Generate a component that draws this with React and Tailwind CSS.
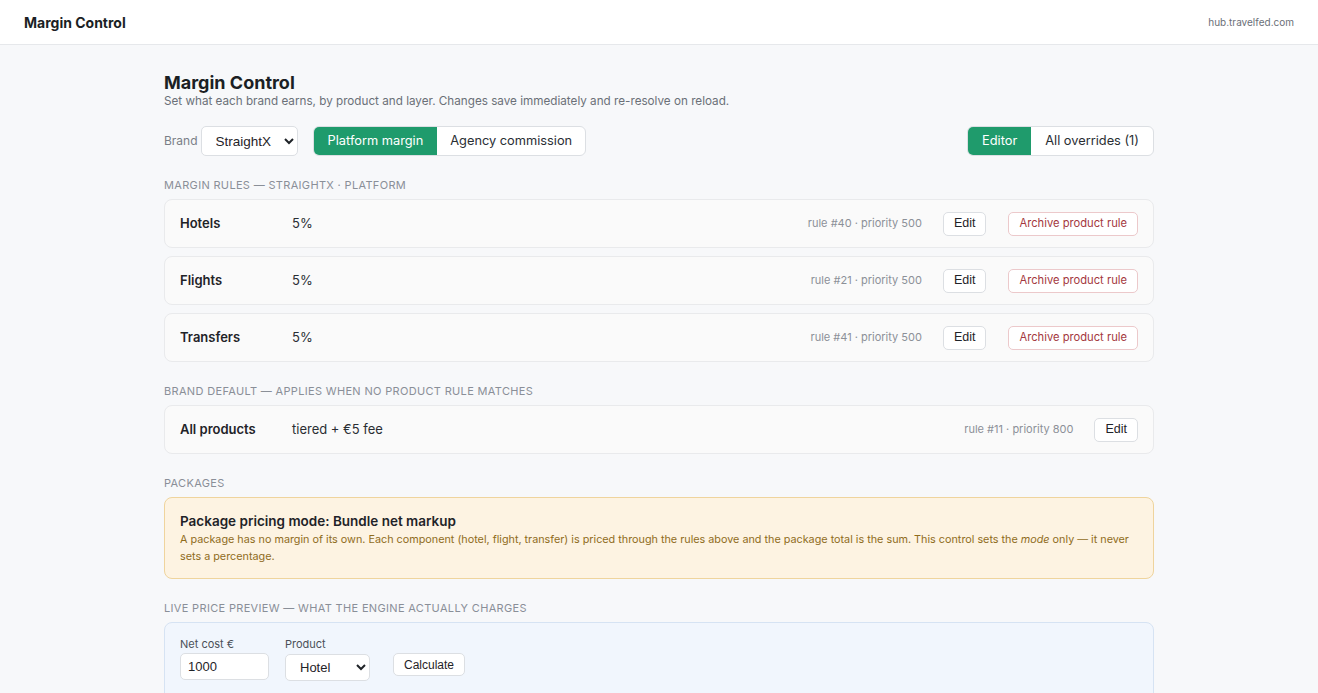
import React from "react";

const rules = [
  { name: "Hotels", value: "5%", meta: "rule #40 · priority 500" },
  { name: "Flights", value: "5%", meta: "rule #21 · priority 500" },
  { name: "Transfers", value: "5%", meta: "rule #41 · priority 500" },
];

const SectionLabel = ({ children }) => (
  <div className="mt-[22px] mb-[7px] text-[11px] uppercase tracking-[0.03em] text-[#8a8f98] leading-[14px]">
    {children}
  </div>
);

const RuleRow = ({ name, value, meta, archive = true }) => (
  <div className="flex items-center h-[49px] px-[15px] bg-[#fafafa] border border-[#e9eaec] rounded-[8px]">
    <div className="w-[112px] text-[13px] font-semibold text-[#1f2328]">{name}</div>
    <div className="text-[13px] text-[#2a2e33]">{value}</div>
    <div className="ml-auto text-[11px] text-[#8c9098]">{meta}</div>
    <button className="ml-[21px] h-[24px] px-[10px] bg-white border border-[#dcdfe3] rounded-[5px] text-[12.5px] text-[#1f2328] font-['Liberation_Sans',sans-serif]">
      Edit
    </button>
    {archive && (
      <button className="ml-[22px] h-[24px] px-[10px] bg-white border border-[#ecc9cb] rounded-[5px] text-[11.2px] text-[#a4383e]">
        Archive product rule
      </button>
    )}
  </div>
);

export default function App() {
  return (
    <div className="min-h-screen bg-[#f7f8fa] font-['Inter',sans-serif] text-[#1f2328]">
      <header className="h-[45px] flex items-center justify-between px-[24px] bg-white border-b border-[#e6e8eb]">
        <div className="text-[14px] font-bold text-[#1b1f24]">Margin Control</div>
        <div className="text-[10px] text-[#6b7078]">hub.travelfed.com</div>
      </header>

      <main className="max-w-[990px] mx-auto pt-[27px] pb-10">
        <h1 className="text-[18px] font-bold leading-[22px] text-[#1b1f24]">Margin Control</h1>
        <p className="text-[11.7px] leading-[14px] text-[#6b7078]">
          Set what each brand earns, by product and layer. Changes save immediately and re-resolve on reload.
        </p>

        <div className="flex items-center mt-[18px]">
          <span className="text-[12px] text-[#7a7f87]">Brand</span>
          <select
            defaultValue="StraightX"
            className="ml-[3px] w-[97px] h-[30px] pl-[10px] pr-[4px] bg-white border border-[#dcdfe3] rounded-[5px] text-[13.5px] text-[#1f2328] font-['Liberation_Sans',sans-serif]"
          >
            <option>StraightX</option>
          </select>
          <div className="ml-[15px] flex h-[30px] border border-[#dcdfe3] rounded-[6px] overflow-hidden bg-white">
            <button className="px-[14px] bg-[#1f9b6c] text-white text-[12.8px]">Platform margin</button>
            <button className="px-[13px] text-[12.8px] text-[#2a2e33]">Agency commission</button>
          </div>
          <div className="ml-auto flex h-[30px] border border-[#dcdfe3] rounded-[6px] overflow-hidden bg-white">
            <button className="px-[14px] bg-[#1f9b6c] text-white text-[12.8px]">Editor</button>
            <button className="px-[14px] text-[12.8px] text-[#2a2e33]">All overrides (1)</button>
          </div>
        </div>

        <SectionLabel>Margin rules — StraightX · Platform</SectionLabel>
        <div className="flex flex-col gap-[8px]">
          {rules.map((r) => (
            <RuleRow key={r.name} {...r} />
          ))}
        </div>

        <SectionLabel>Brand default — applies when no product rule matches</SectionLabel>
        <RuleRow name="All products" value="tiered + €5 fee" meta="rule #11 · priority 800" archive={false} />

        <SectionLabel>Packages</SectionLabel>
        <div className="bg-[#fdf3e2] border border-[#efd49d] rounded-[8px] px-[15px] pt-[14px] pb-[13px]">
          <div className="text-[13.5px] font-semibold leading-[18px] text-[#1f2328]">
            Package pricing mode: Bundle net markup
          </div>
          <p className="mt-[1px] text-[10.8px] leading-[17px] text-[#8f6c1c]">
            A package has no margin of its own. Each component (hotel, flight, transfer) is priced through the rules
            above and the package total is the sum. This control sets the <em>mode</em> only — it never sets a
            percentage.
          </p>
        </div>

        <SectionLabel>Live price preview — what the engine actually charges</SectionLabel>
        <div className="bg-[#f1f6fd] border border-[#d6e3f3] rounded-[8px] px-[15px] pt-[14px] pb-[20px]">
          <div className="flex items-start gap-[16px]">
            <label className="flex flex-col">
              <span className="text-[11px] leading-[15px] text-[#4b5058]">Net cost €</span>
              <input
                defaultValue="1000"
                className="mt-[1px] w-[89px] h-[27px] px-[7px] bg-white border border-[#dcdfe3] rounded-[5px] text-[13px] text-[#1f2328] font-['Liberation_Sans',sans-serif]"
              />
            </label>
            <label className="flex flex-col">
              <span className="text-[11px] leading-[15px] text-[#4b5058]">Product</span>
              <select
                defaultValue="Hotel"
                className="mt-[2px] w-[85px] h-[27px] pl-[10px] pr-[4px] bg-white border border-[#dcdfe3] rounded-[5px] text-[13px] text-[#1f2328] font-['Liberation_Sans',sans-serif]"
              >
                <option>Hotel</option>
                <option>Flight</option>
                <option>Transfer</option>
              </select>
            </label>
            <button className="ml-[7px] mt-[16px] h-[23px] px-[10px] bg-white border border-[#dcdfe3] rounded-[5px] text-[12px] text-[#1f2328] font-['Liberation_Sans',sans-serif]">
              Calculate
            </button>
          </div>
        </div>
      </main>
    </div>
  );
}
